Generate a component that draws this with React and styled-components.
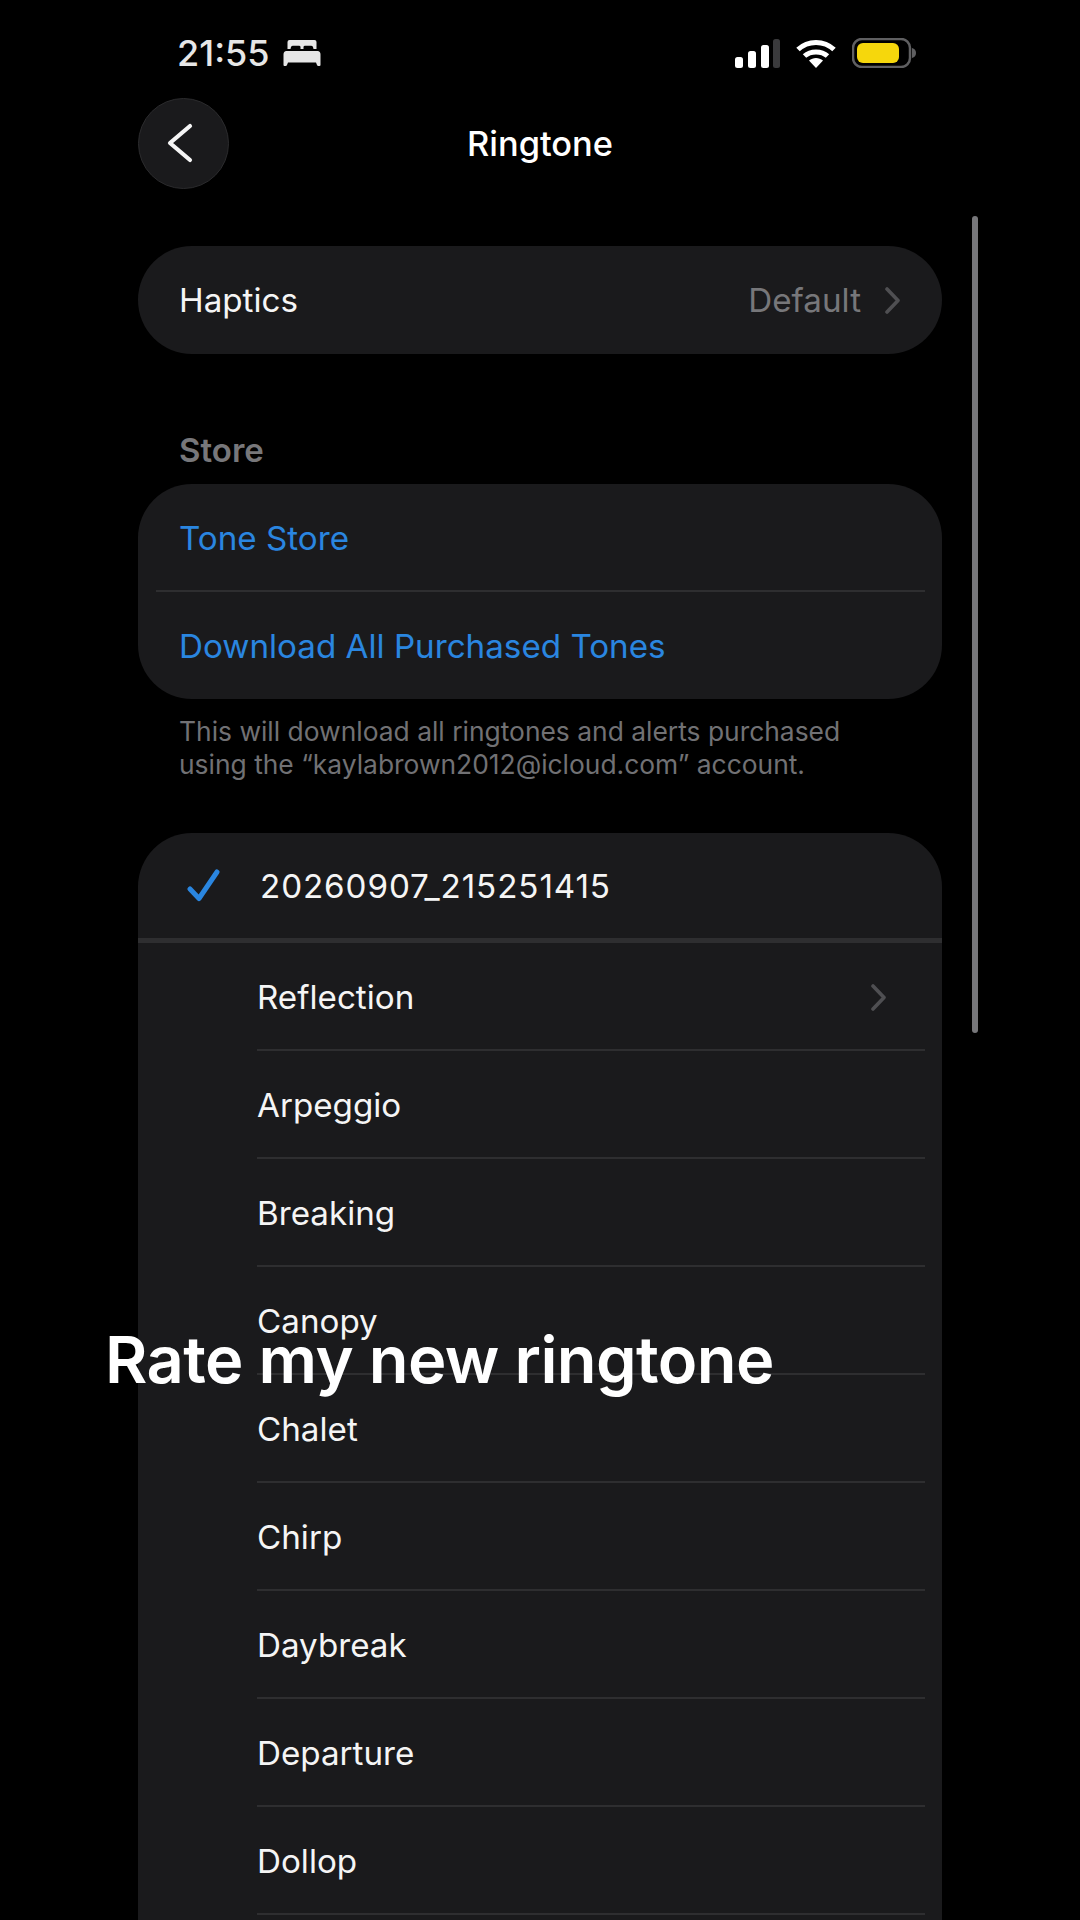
import React from 'react';
import styled, {createGlobalStyle} from 'styled-components';

const Global = createGlobalStyle`
  html, body {
    margin: 0;
    padding: 0;
    background: #000;
  }
  body {
    font-family: Inter, "Liberation Sans", sans-serif;
    color: #f5f5f5;
  }
`;

const Screen = styled.div`
  position: relative;
  width: 1080px;
  height: 1920px;
  overflow: hidden;
  background: #000;
`;

const Content = styled.div`
  display: flex;
  flex-direction: column;
  padding: 0 138px;
`;

const StatusBar = styled.div`
  display: flex;
  align-items: center;
  justify-content: space-between;
  height: 52px;
  padding: 27px 26px 0 39px;
`;

const StatusLeft = styled.div`
  display: flex;
  align-items: center;
  gap: 13px;
`;

const Time = styled.span`
  font-size: 36px;
  font-weight: 500;
  color: #e6e6e6;
`;

const StatusRight = styled.div`
  display: flex;
  align-items: center;
  gap: 16px;
`;

const NavBar = styled.div`
  position: relative;
  display: flex;
  align-items: center;
  justify-content: center;
  height: 92px;
  margin: 19px 0 56px;
`;

const BackButton = styled.div`
  position: absolute;
  left: 0;
  top: 0;
  width: 91px;
  height: 91px;
  box-sizing: border-box;
  border-radius: 50%;
  background: #1a1a1c;
  border: 1px solid #2b2b2d;
  display: flex;
  align-items: center;
  justify-content: center;
`;

const BackGlyph = styled.svg`
  margin: -2px 0 0 -8px;
`;

const Title = styled.div`
  font-size: 34.4px;
  font-weight: 500;
  color: #fff;
  padding-bottom: 2px;
`;

const Card = styled.div`
  background: #1a1a1c;
  border-radius: 54px;
  margin-bottom: ${p => p.$gap || 0}px;
`;

const PlainRow = styled.div`
  display: flex;
  align-items: center;
  justify-content: space-between;
  box-sizing: border-box;
  height: ${p => p.$h || 108}px;
  padding: ${p => p.$top || 0}px 42px 0 41px;
  font-size: 33.2px;
  color: ${p => p.$blue ? '#2a86e0' : '#f5f5f5'};
`;

const Value = styled.div`
  display: flex;
  align-items: center;
  gap: 24px;
  color: #77777a;
`;

const Sep = styled.div`
  height: 2px;
  margin: 0 17px 0 18px;
  background: #2e2e30;
`;

const SectionLabel = styled.div`
  font-size: 33px;
  font-weight: 600;
  color: #77777a;
  padding-left: 41px;
  height: 39px;
  line-height: 39px;
  margin-bottom: 14px;
`;

const Footnote = styled.div`
  box-sizing: border-box;
  font-size: 26.4px;
  line-height: 33px;
  color: #717174;
  padding: 16px 41px 0;
  height: 134px;
`;

const CheckedRow = styled.div`
  display: flex;
  align-items: center;
  height: 105px;
  padding-left: 49px;
  gap: 40px;
  font-size: 33.2px;
  letter-spacing: 0.9px;
  border-bottom: 5px solid #2e2e30;
`;

const ToneRow = styled.div`
  display: flex;
  align-items: center;
  justify-content: space-between;
  box-sizing: border-box;
  height: 108px;
  margin: 0 17px 0 119px;
  padding: 2px 39px 0 0;
  font-size: 33.2px;
  color: #f5f5f5;
  border-bottom: 2px solid #2e2e30;
`;

const Scrollbar = styled.div`
  position: absolute;
  left: 972px;
  top: 216px;
  width: 6px;
  height: 817px;
  border-radius: 3px;
  background: #77777a;
`;

const Caption = styled.div`
  position: absolute;
  left: 105px;
  top: 1320px;
  font-size: 65px;
  font-weight: 600;
  letter-spacing: -0.6px;
  line-height: 80px;
  color: #fff;
  white-space: nowrap;
`;

const Chevron = ({color}) => (
  <svg width="15" height="27" viewBox="0 0 15 27" fill="none">
    <path d="M2 2 L13 13.5 L2 25" stroke={color} strokeWidth="3.6" strokeLinecap="round" strokeLinejoin="round" />
  </svg>
);

const BackIcon = () => (
  <BackGlyph width="26" height="40" viewBox="0 0 26 40" fill="none">
    <path d="M23 3 L3 20 L23 37" stroke="#f5f5f5" strokeWidth="4.2" strokeLinecap="round" strokeLinejoin="round" />
  </BackGlyph>
);

const BedIcon = () => (
  <svg width="38" height="26" viewBox="0 0 38 26" fill="#e6e6e6">
    <path d="M4.5 2 Q4.5 0 6.5 0 H31.5 Q33.5 0 33.5 2 V9 H30.5 L30 7 Q29.5 5.8 28 5.8 H22 Q20.5 5.8 20.5 7 V9 H17.5 V7 Q17.5 5.8 16 5.8 H10 Q8.5 5.8 8 7 L7.5 9 H4.5 Z" />
    <path d="M3.5 11 H34.5 Q37.5 11 37.5 14.5 V25 Q37.5 26 36.5 26 H35.2 Q34.4 26 34 25 L33 22.5 H5 L4 25 Q3.6 26 2.8 26 H1.5 Q0.5 26 0.5 25 V14.5 Q0.5 11 3.5 11 Z" />
  </svg>
);

const SignalIcon = () => (
  <svg width="45" height="29" viewBox="0 0 45 29">
    <rect x="0" y="18" width="8" height="11" rx="2.5" fill="#fff" />
    <rect x="13" y="12" width="8" height="17" rx="2.5" fill="#fff" />
    <rect x="26" y="6" width="8" height="23" rx="2.5" fill="#fff" />
    <rect x="38" y="0" width="7" height="29" rx="2.5" fill="#3a3a3c" />
  </svg>
);

const WifiIcon = () => (
  <svg width="40" height="29" viewBox="0 0 40 29" fill="none" stroke="#fff" strokeWidth="5">
    <path d="M2 10.5 C12 1 28 1 38 10.5" />
    <path d="M8.5 17 C14.5 11.5 25.5 11.5 31.5 17" />
    <path d="M13 21.5 C17 18 23 18 27 21.5 L20 29 Z" fill="#fff" stroke="none" />
  </svg>
);

const BatteryIcon = () => (
  <svg width="64" height="30" viewBox="0 0 64 30">
    <rect x="1" y="1" width="57" height="28" rx="9" fill="none" stroke="#5f5f61" strokeWidth="2.5" />
    <rect x="5" y="5" width="42" height="20" rx="6" fill="#f6d70c" />
    <path d="M60 10 Q64 11 64 15 Q64 19 60 20 Z" fill="#5f5f61" />
  </svg>
);

const CheckIcon = () => (
  <svg width="33" height="33" viewBox="0 0 33 33" fill="none">
    <path d="M3 20 L12 29.5 L30 3" stroke="#2a86e0" strokeWidth="5" strokeLinecap="round" strokeLinejoin="round" />
  </svg>
);

const tones = ['Reflection', 'Arpeggio', 'Breaking', 'Canopy', 'Chalet', 'Chirp', 'Daybreak', 'Departure', 'Dollop', ''];

export default function App() {
  return (
    <Screen>
      <Global />
      <Content>
        <StatusBar>
          <StatusLeft>
            <Time>21:55</Time>
            <BedIcon />
          </StatusLeft>
          <StatusRight>
            <SignalIcon />
            <WifiIcon />
            <BatteryIcon />
          </StatusRight>
        </StatusBar>
        <NavBar>
          <BackButton><BackIcon /></BackButton>
          <Title>Ringtone</Title>
        </NavBar>
        <Card $gap={77}>
          <PlainRow>
            Haptics
            <Value>Default <Chevron color="#4f4f52" /></Value>
          </PlainRow>
        </Card>
        <SectionLabel>Store</SectionLabel>
        <Card>
          <PlainRow $blue $h={106} $top={2}>Tone Store</PlainRow>
          <Sep />
          <PlainRow $blue $h={107}>Download All Purchased Tones</PlainRow>
        </Card>
        <Footnote>
          This will download all ringtones and alerts purchased<br />
          using the “kaylabrown2012@icloud.com” account.
        </Footnote>
        <Card>
          <CheckedRow>
            <CheckIcon />
            20260907_215251415
          </CheckedRow>
          {tones.map((t, i) => (
            <ToneRow key={i}>
              {t}
              {i === 0 && <Chevron color="#4f4f52" />}
            </ToneRow>
          ))}
        </Card>
      </Content>
      <Scrollbar />
      <Caption>Rate my new ringtone</Caption>
    </Screen>
  );
}
